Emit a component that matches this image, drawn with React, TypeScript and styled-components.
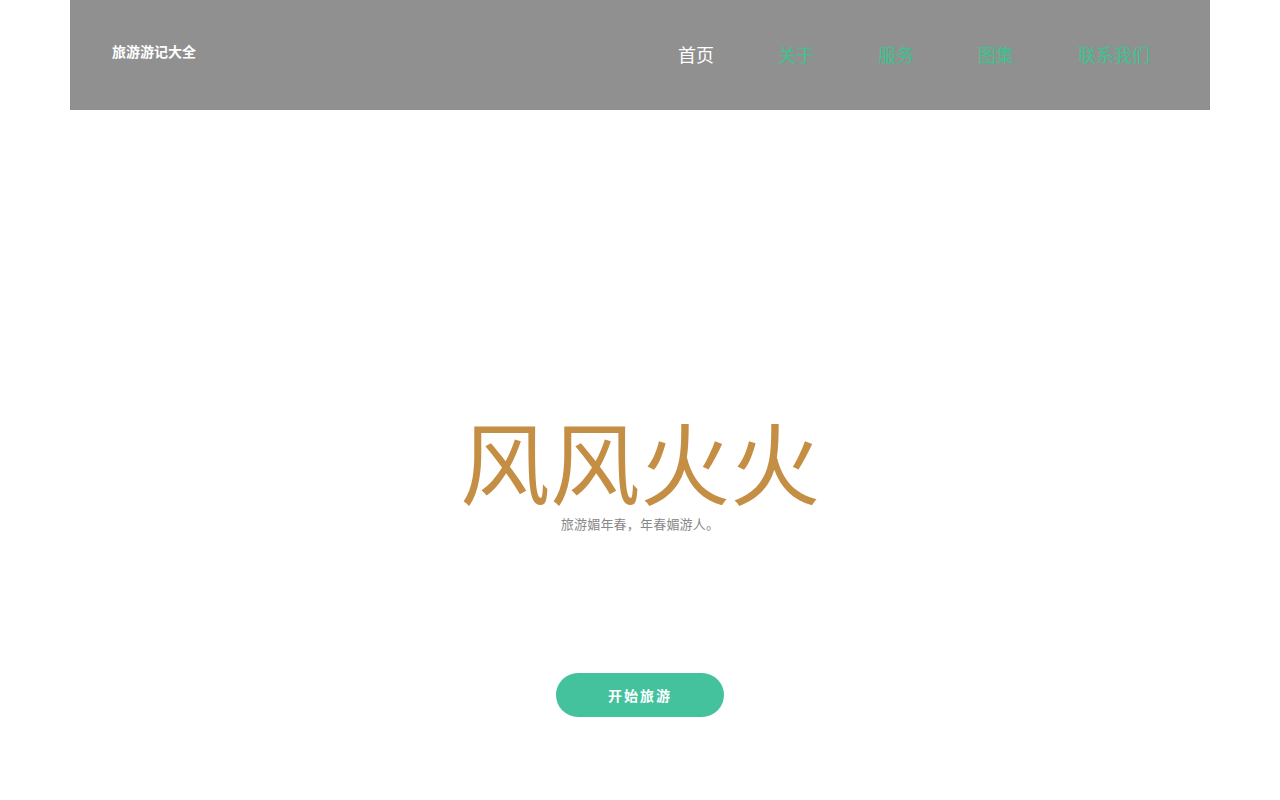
import styled, { createGlobalStyle } from "styled-components";

const GlobalStyle = createGlobalStyle`
  html, body {
    margin: 0;
    padding: 0;
    background: #fff;
    font-family: "Liberation Sans", "Noto Sans CJK SC", sans-serif;
  }
`;

const Page = styled.div`
  width: 1140px;
  margin: 0 auto;
`;

const Header = styled.header`
  height: 110px;
  background: #909090;
  display: flex;
  align-items: center;
  justify-content: space-between;
  padding: 0 28px 0 42px;
`;

const Logo = styled.span`
  color: #fff;
  font-size: 14px;
  font-weight: bold;
  margin-top: -8px;
`;

const NavList = styled.ul`
  display: flex;
  list-style: none;
  margin: -2px 0 0;
  padding: 0;
`;

const NavItem = styled.li<{ $active?: boolean }>`
  padding: 0 32px;
  font-size: 18px;
  color: ${(p) => (p.$active ? "#fff" : "#3ec28f")};
  cursor: pointer;
`;

const Hero = styled.section`
  display: flex;
  flex-direction: column;
  align-items: center;
  padding-top: 309px;
`;

const Title = styled.h1`
  margin: 0;
  font-size: 90px;
  font-weight: normal;
  line-height: 96px;
  color: #c48f45;
`;

const Subtitle = styled.p`
  margin: 0;
  font-size: 13px;
  letter-spacing: 0.2px;
  line-height: 20px;
  color: #888;
`;

const StartButton = styled.button`
  margin-top: 138px;
  width: 168px;
  height: 44px;
  border: none;
  border-radius: 22px;
  background: #43c29d;
  color: #fff;
  font-family: inherit;
  font-size: 14px;
  font-weight: bold;
  letter-spacing: 2px;
  cursor: pointer;
`;

const navs = ["首页", "关于", "服务", "图集", "联系我们"];

export default function App() {
  return (
    <Page>
      <GlobalStyle />
      <Header>
        <Logo>旅游游记大全</Logo>
        <NavList>
          {navs.map((n, i) => (
            <NavItem key={n} $active={i === 0}>
              {n}
            </NavItem>
          ))}
        </NavList>
      </Header>
      <Hero>
        <Title>风风火火</Title>
        <Subtitle>旅游媚年春，年春媚游人。</Subtitle>
        <StartButton>开始旅游</StartButton>
      </Hero>
    </Page>
  );
}
